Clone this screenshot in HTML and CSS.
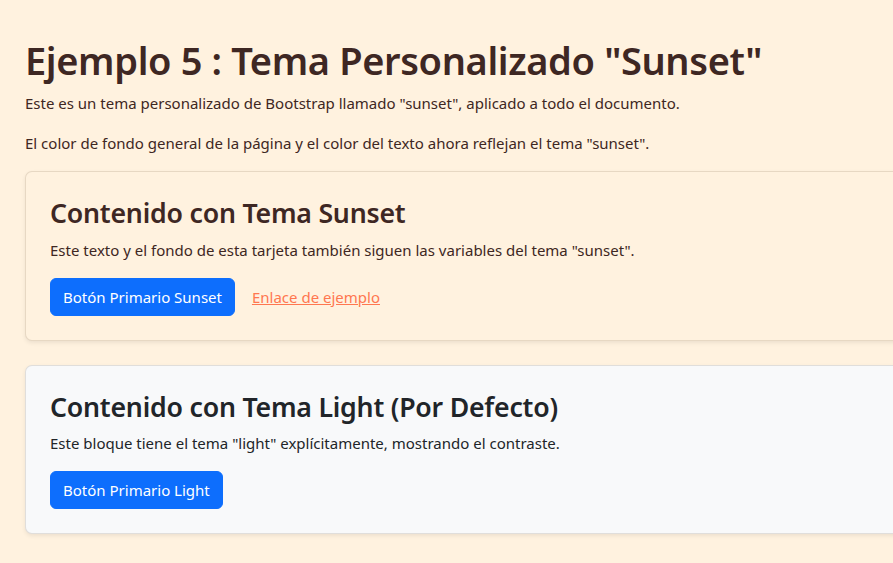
FILE: index.html
```html
<!DOCTYPE html>
<html lang="es">
<head>
<meta charset="utf-8">
<title>Ejemplo 5</title>
<link rel="stylesheet" href="styles.css">
</head>
<body>
<main class="page">
  <h1 class="title">Ejemplo 5 : Tema Personalizado "Sunset"</h1>
  <p class="text">Este es un tema personalizado de Bootstrap llamado "sunset", aplicado a todo el documento.</p>
  <p class="text">El color de fondo general de la página y el color del texto ahora reflejan el tema "sunset".</p>

  <section class="card card-sunset">
    <h2 class="card-title">Contenido con Tema Sunset</h2>
    <p class="card-text">Este texto y el fondo de esta tarjeta también siguen las variables del tema "sunset".</p>
    <div class="actions">
      <a class="btn" href="#">Botón Primario Sunset</a>
      <a class="link" href="#">Enlace de ejemplo</a>
    </div>
  </section>

  <section class="card card-light">
    <h2 class="card-title">Contenido con Tema Light (Por Defecto)</h2>
    <p class="card-text">Este bloque tiene el tema "light" explícitamente, mostrando el contraste.</p>
    <div class="actions">
      <a class="btn" href="#">Botón Primario Light</a>
    </div>
  </section>
</main>
</body>
</html>
```
FILE: styles.css
```css
html, body {
  overflow: hidden;
}
body {
  margin: 0;
  background: #fff2df;
  color: #3e2723;
  font-family: "Noto Sans", "Open Sans", sans-serif;
  font-size: 15px;
  line-height: 24px;
}
.page {
  width: 1140px;
  padding: 36px 25px 35px;
}
.title {
  margin: 0 0 7px;
  font-size: 38px;
  font-weight: 600;
  line-height: 48px;
  letter-spacing: -0.36px;
}
.text {
  margin: 0 0 16px;
}
.card {
  border: 1px solid rgba(60, 30, 0, 0.12);
  border-radius: 7px;
  box-shadow: 0 2px 4px rgba(0, 0, 0, 0.075);
  padding: 24px;
  margin-bottom: 24px;
}
.card-sunset {
  background: #fff2df;
  color: #3e2723;
}
.card-light {
  background: #f8f9fa;
  color: #212529;
}
.card-title {
  margin: 0 0 8px;
  font-size: 26.7px;
  font-weight: 600;
  line-height: 33.6px;
  letter-spacing: -0.22px;
}
.card-text {
  margin: 0 0 16px;
}
.actions {
  display: flex;
  align-items: center;
  gap: 17px;
}
.btn {
  display: inline-block;
  padding: 6px 12px;
  border: 1px solid #0d6efd;
  border-radius: 6px;
  background: #0d6efd;
  color: #fff;
  text-decoration: none;
  line-height: 24px;
}
.link {
  color: #ff7750;
  text-decoration: underline;
}
```
